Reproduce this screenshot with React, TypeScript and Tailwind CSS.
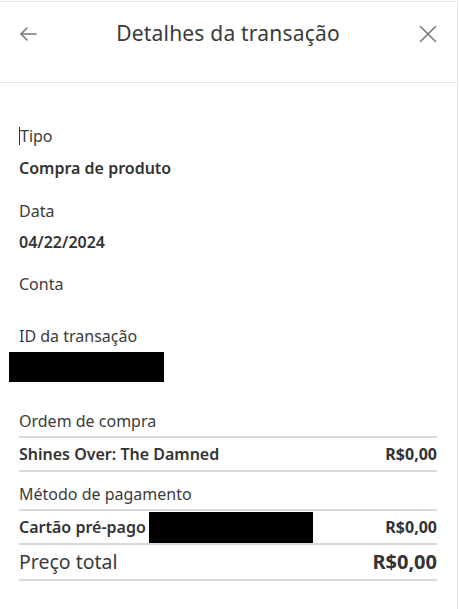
import React from 'react';

// Transaction details panel

const font = { fontFamily: '"Noto Sans", "Open Sans", Arial, sans-serif' };

function Label({ children }: { children: React.ReactNode }) {
    return <div className="text-[16px] leading-[20px] text-[#3b3b3b]">{children}</div>;
}

function Value({ children }: { children: React.ReactNode }) {
    return <div className="text-[16px] leading-[20px] font-semibold text-[#333]">{children}</div>;
}

export default function App() {
    return (
        <div className="w-[459px] h-[609px] bg-white pt-px" style={font}>
            <div className="w-[458px] h-[608px] border-t border-r border-[#e8e8e8]">
                {/* Header */}
                <div className="h-[81px] pt-[10px] border-b border-[#e3e3e3]">
                    <div className="h-[44px] flex items-center justify-between pl-[19px] pr-[20px]">
                        <svg width="18" height="18" viewBox="0 0 18 18" fill="none" stroke="#7a7a7a" strokeWidth="1.6" strokeLinecap="round" strokeLinejoin="round">
                            <path d="M17 9H2" />
                            <path d="M8 3 2 9l6 6" />
                        </svg>
                        <h1 className="text-[21px] text-[#3a3a3a] tracking-[0.2px]">Detalhes da transação</h1>
                        <svg width="18" height="18" viewBox="0 0 18 18" fill="none" stroke="#7a7a7a" strokeWidth="1.6" strokeLinecap="round">
                            <path d="M1.5 1.5 16.5 16.5" />
                            <path d="M16.5 1.5 1.5 16.5" />
                        </svg>
                    </div>
                </div>

                {/* Body */}
                <div className="pl-[19px] pr-[20px]">
                    <div className="mt-[43px] flex items-center text-[16px] leading-[20px] text-[#3b3b3b]">
                        <span className="inline-block w-px h-[18px] bg-[#333]"></span>
                        <span>Tipo</span>
                    </div>
                    <div className="mt-[12px]">
                        <Value>Compra de produto</Value>
                    </div>

                    <div className="mt-[23px]">
                        <Label>Data</Label>
                    </div>
                    <div className="mt-[11px]">
                        <Value>04/22/2024</Value>
                    </div>

                    <div className="mt-[22px]">
                        <Label>Conta</Label>
                    </div>

                    <div className="mt-[32px]">
                        <Label>ID da transação</Label>
                    </div>
                    <div className="mt-[6px] -ml-[10px] w-[155px] h-[30px] bg-black"></div>

                    {/* Purchase order */}
                    <div className="mt-[26px] h-[30px] pt-[3px] border-b-2 border-[#dadada]">
                        <Label>Ordem de compra</Label>
                    </div>
                    <div className="h-[34px] flex items-center justify-between border-b-2 border-[#dadada]">
                        <Value>Shines Over: The Damned</Value>
                        <div className="text-[16px] leading-[20px] font-bold text-[#333]">R$0,00</div>
                    </div>

                    {/* Payment method */}
                    <div className="h-[39px] pt-[12px] border-b-2 border-[#dadada]">
                        <Label>Método de pagamento</Label>
                    </div>
                    <div className="h-[34px] flex items-center justify-between border-b-2 border-[#dadada]">
                        <div className="flex items-center">
                            <Value>Cartão pré-pago</Value>
                            <div className="ml-[3px] w-[164px] h-[31px] bg-black"></div>
                        </div>
                        <div className="text-[16px] leading-[20px] font-bold text-[#333]">R$0,00</div>
                    </div>

                    {/* Total */}
                    <div className="h-[36px] flex items-center justify-between border-b-2 border-[#dadada]">
                        <span className="text-[19.5px] leading-[26px] text-[#3b3b3b]">Preço total</span>
                        <span className="text-[20px] leading-[26px] font-bold text-[#333]">R$0,00</span>
                    </div>
                </div>
            </div>
        </div>
    );
}
